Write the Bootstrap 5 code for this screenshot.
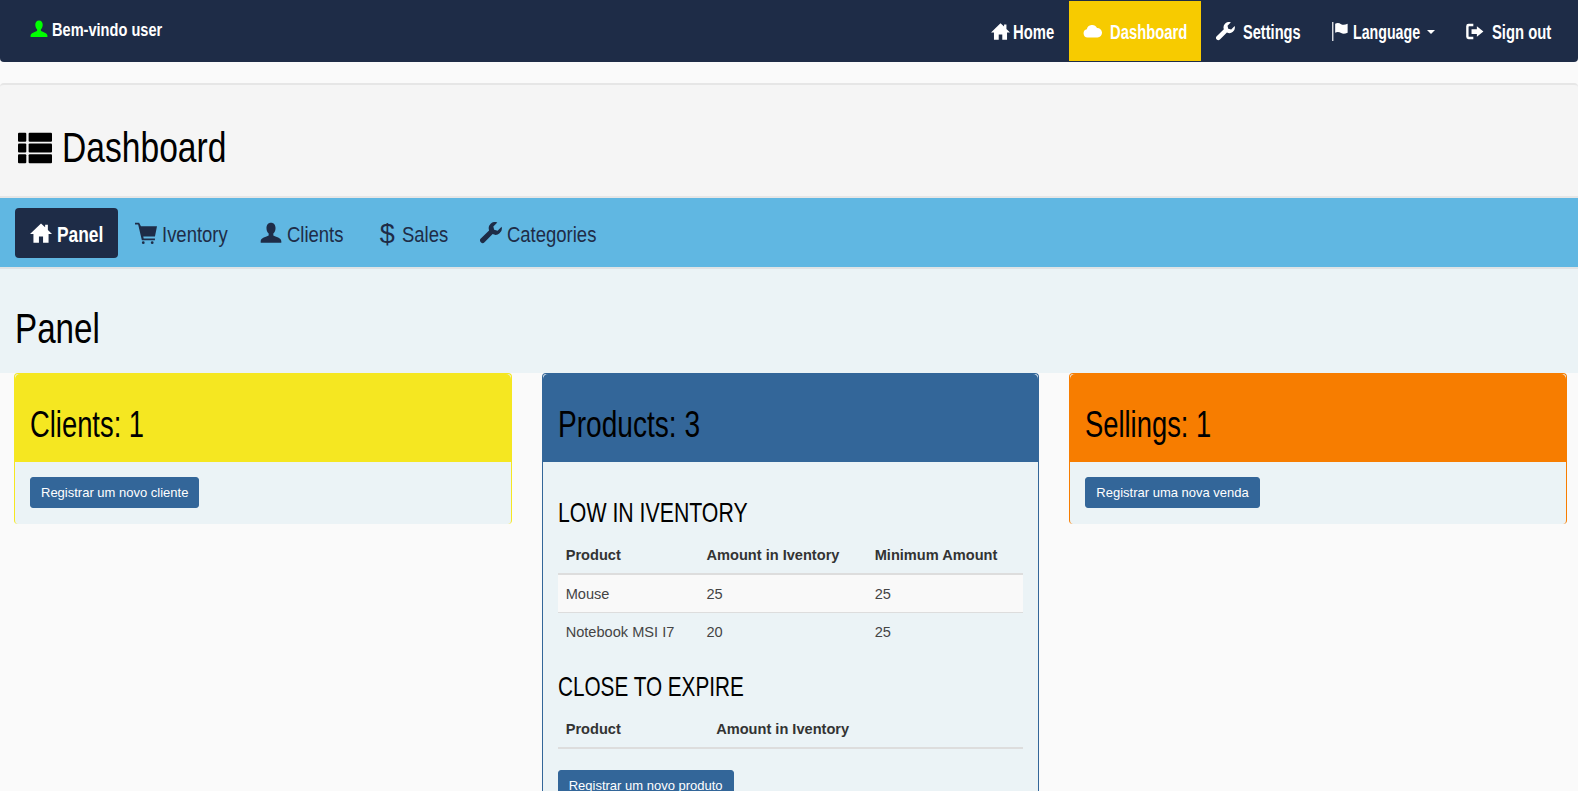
<!DOCTYPE html>
<html lang="en">
<head>
    <meta charset="UTF-8">
    <meta name="viewport" content="width=device-width, initial-scale=1.0">
    <title>Dashboard</title>
    <link rel="stylesheet" href="https://cdn.jsdelivr.net/npm/bootstrap@5.3.0/dist/css/bootstrap.min.css">
    <style>
        body {
            background: #fafafa;
            font-family: "Liberation Sans", Arial, sans-serif;
            font-size: 14px;
            color: #333;
        }

        /* Fonte condensada: sem familia estreita instalada, a largura vem do scaleX */
        .cond {
            display: inline-block;
            transform-origin: left center;
            white-space: nowrap;
        }

        .cond-71 { transform: scaleX(.71); }
        .cond-73 { transform: scaleX(.73); }
        .cond-74 { transform: scaleX(.74); }
        .cond-76 { transform: scaleX(.76); }
        .cond-78 { transform: scaleX(.78); }
        .cond-79 { transform: scaleX(.79); }
        .cond-80 { transform: scaleX(.80); }
        .cond-81 { transform: scaleX(.81); }
        .cond-84 { transform: scaleX(.84); }

        svg.gi {
            width: 1em;
            height: 1em;
            fill: currentColor;
            vertical-align: -0.1em;
        }

        /* Barra superior */
        .top-bar {
            background: #1e2c47;
            height: 62px;
            padding: 0 12px 0 30px;
            border-radius: 0 0 4px 4px;
            font-size: 20px;
        }

        .welcome-text {
            color: #fff;
            font-size: 18px;
            font-weight: 700;
            margin-top: 17px;
        }

        .welcome-text svg {
            color: #00ff00;
            margin-right: 4px;
        }

        .top-bar .navbar-nav .nav-link {
            color: #fff;
            font-weight: 700;
            height: 60px;
            padding: 18px 15px 0;
            line-height: 26px;
        }

        .top-bar .navbar-nav .nav-link.active {
            background: #f7cb00;
            color: #fff;
            padding: 18px 14px 0;
        }

        .top-bar .nav-link svg {
            font-size: 19px;
            margin-right: 3px;
        }

        .top-bar .nav-link svg.me-2 {
            margin-right: 8px !important;
        }

        .top-bar .nav-item {
            margin-top: 1px;
        }

        .top-bar .dropdown-toggle::after {
            border-width: 4px 4px 0;
            margin-left: 7px;
        }

        /* Titulo */
        .title-band {
            background: #f5f5f5;
            border-top: 2px solid #e6e6e6;
            border-bottom: 2px solid #e6e6e6;
            border-radius: 4px 4px 0 0;
            height: 115px;
            margin-top: 21px;
            padding: 40px 18px 0;
            color: #000;
        }

        .title-band h1 {
            font-size: 42px;
            margin: 0;
            line-height: 46px;
        }

        .title-band svg {
            margin-right: 10px;
            font-size: 34px;
            vertical-align: -3px;
        }

        /* Menu de abas */
        .section-tabs {
            background: #60b7e2;
            height: 71px;
            padding: 10px 15px;
            border-bottom: 2px solid #dfe3e5;
            gap: 2px;
            font-size: 22px;
        }

        .section-tabs .nav-link {
            color: #1e2c47;
            padding: 0 15px;
            height: 50px;
            line-height: 54px;
            border-radius: 4px;
        }

        .section-tabs .nav-link svg {
            font-size: 22px;
            margin-right: 5px;
        }

        .section-tabs .nav-link.active {
            background: #1e2c47;
            color: #fff;
            font-weight: 700;
        }

        .dollar-sign {
            font-size: 27px;
            line-height: 1;
            margin: 0 7px 0 4px;
            vertical-align: -1px;
        }

        .panel-band {
            background: #ebf3f6;
            height: 104px;
            padding: 37px 15px 0;
            color: #000;
        }

        .panel-band h2 {
            font-size: 42px;
            line-height: 46px;
            margin: 0;
        }

        /* Cards */
        .cards-area {
            padding: 0 11px 0 14px;
        }

        .cards-row {
            --bs-gutter-x: 30px;
        }

        .stat-card {
            background: #ebf3f6;
            border-radius: 4px;
            border-bottom: 0;
        }

        .stat-card .card-header {
            height: 88px;
            padding: 31px 15px 0;
            border: 0;
            color: #000;
        }

        .stat-card .card-header h3 {
            font-size: 36px;
            line-height: 40px;
            margin: 0;
        }

        .stat-card .card-body {
            padding: 15px 15px 16px;
        }

        .card-yellow { border-color: #f5e721; }
        .card-yellow .card-header { background: #f5e721; }
        .card-blue { border-color: #336699; }
        .card-blue .card-header { background: #336699; }
        .card-orange { border-color: #f77d00; }
        .card-orange .card-header { background: #f77d00; }

        .btn-register {
            background: #336699;
            border-color: #336699;
            color: #fff;
            font-size: 13px;
            line-height: 19px;
            padding: 5px 10px;
            border-radius: 3px;
        }

        .list-title {
            font-size: 28px;
            line-height: 32px;
            margin: 20px 0 8px;
            color: #000;
        }

        .stock-table {
            --bs-table-bg: transparent;
            --bs-table-color: #333;
            margin-bottom: 21px;
            font-size: 14.6px;
        }

        .stock-table th, .stock-table td {
            padding: 8px;
            line-height: 20px;
            border-color: #ddd;
        }

        .stock-table td {
            padding: 9px 8px 7px;
            line-height: 21px;
            color: #444;
        }

        .stock-table thead th {
            border-bottom: 2px solid #ddd;
        }

        .stock-table tbody tr:last-child td {
            border-bottom: 0;
        }

        .stock-table .row-light td {
            background: #f9f9f9;
        }
    </style>
</head>
<body>
    <svg class="d-none">
        <symbol id="i-user" viewBox="0 0 16 16"><path d="M8 .5c2.1 0 3.3 1.6 3.3 3.8 0 1.7-.6 3.1-1.6 4v1.5c1.7.9 5.8 1.6 5.8 4.2v1H.5v-1c0-2.6 4.100-3.300 5.800-4.200V8.300c-1-.9-1.600-2.300-1.600-4C4.700 2.100 5.900.5 8 .5z"/></symbol>
        <symbol id="i-home" viewBox="0 0 16 16"><path d="M8 1 0 8.800h2.500V15h4v-4.500h3V15h4V8.800H16l-3-3V2h-2v1.800z"/></symbol>
        <symbol id="i-cloud" viewBox="0 0 16 16"><path d="M3.800 13a3.500 3.500 0 0 1-.6-6.900A4.600 4.600 0 0 1 11.800 5 4 4 0 0 1 12.200 13z"/></symbol>
        <symbol id="i-wrench" viewBox="0 0 16 16"><path d="m15.700 3.400-2.900 2.900-2.500-.6-.6-2.500L12.600.3a4.600 4.600 0 0 0-6 5.800L.6 12a1.900 1.900 0 0 0 2.700 2.700l5.900-5.900a4.600 4.600 0 0 0 6.500-5.400z"/></symbol>
        <symbol id="i-flag" viewBox="0 0 16 16"><path d="M1 0h1v16H1zM3.500 1.500c2-1 3.500-.5 5 .3s3 .8 5.500-.3v7.500c-2.500 1.100-4 1.100-5.500.3s-3-1.300-5-.3z"/></symbol>
        <symbol id="i-logout" viewBox="0 0 16 16"><path d="M7 1.500H3a2 2 0 0 0-2 2v9a2 2 0 0 0 2 2h4v-2H3.500a.5.500 0 0 1-.5-.5v-8a.5.500 0 0 1 .5-.5H7z"/><path d="M10 3.500 15.500 8 10 12.500V10H5.500V6H10z"/></symbol>
        <symbol id="i-cart" viewBox="0 0 16 16"><path d="M0 .5h3L4.300 3H16l-1.500 7.500H6l.3 1.500h8.200v1.300H5L2.300 1.800H0z"/><circle cx="6" cy="15" r="1"/><circle cx="12.500" cy="15" r="1"/></symbol>
        <symbol id="i-list" viewBox="0 0 16 16"><rect x="0" y=".8" width="3.900" height="4.300" rx=".5"/><rect x="5" y=".8" width="11" height="4.300" rx=".5"/><rect x="0" y="5.850" width="3.900" height="4.300" rx=".5"/><rect x="5" y="5.850" width="11" height="4.300" rx=".5"/><rect x="0" y="10.900" width="3.900" height="4.300" rx=".5"/><rect x="5" y="10.900" width="11" height="4.300" rx=".5"/></symbol>
    </svg>

    <nav class="navbar navbar-expand top-bar d-flex justify-content-between align-items-start">
        <span class="welcome-text"><svg class="gi"><use href="#i-user"/></svg><span class="cond cond-81">Bem-vindo user</span></span>
        <ul class="navbar-nav">
            <li class="nav-item"><a class="nav-link" href="#"><svg class="gi"><use href="#i-home"/></svg><span class="cond cond-74">Home</span></a></li>
            <li class="nav-item"><a class="nav-link active" href="#"><svg class="gi me-2"><use href="#i-cloud"/></svg><span class="cond cond-74">Dashboard</span></a></li>
            <li class="nav-item"><a class="nav-link" href="#"><svg class="gi me-2"><use href="#i-wrench"/></svg><span class="cond cond-73">Settings</span></a></li>
            <li class="nav-item"><a class="nav-link dropdown-toggle" href="#"><svg class="gi"><use href="#i-flag"/></svg><span class="cond cond-71">Language</span></a></li>
            <li class="nav-item"><a class="nav-link" href="#"><svg class="gi me-2"><use href="#i-logout"/></svg><span class="cond cond-74">Sign out</span></a></li>
        </ul>
    </nav>

    <div class="title-band">
        <h1><svg class="gi"><use href="#i-list"/></svg><span class="cond cond-80">Dashboard</span></h1>
    </div>

    <ul class="nav section-tabs">
        <li class="nav-item"><a class="nav-link active" href="#"><svg class="gi"><use href="#i-home"/></svg><span class="cond cond-79">Panel</span></a></li>
        <li class="nav-item"><a class="nav-link" href="#"><svg class="gi"><use href="#i-cart"/></svg><span class="cond cond-84">Iventory</span></a></li>
        <li class="nav-item"><a class="nav-link" href="#"><svg class="gi"><use href="#i-user"/></svg><span class="cond cond-84">Clients</span></a></li>
        <li class="nav-item"><a class="nav-link" href="#"><span class="dollar-sign">$</span><span class="cond cond-84">Sales</span></a></li>
        <li class="nav-item"><a class="nav-link" href="#"><svg class="gi"><use href="#i-wrench"/></svg><span class="cond cond-84">Categories</span></a></li>
    </ul>

    <div class="panel-band">
        <h2><span class="cond cond-79">Panel</span></h2>
    </div>

    <div class="cards-area">
        <div class="row cards-row">
            <div class="col-4">
                <div class="card stat-card card-yellow">
                    <div class="card-header"><h3><span class="cond cond-76">Clients: 1</span></h3></div>
                    <div class="card-body">
                        <a class="btn btn-register" href="#">Registrar um novo cliente</a>
                    </div>
                </div>
            </div>
            <div class="col-4">
                <div class="card stat-card card-blue">
                    <div class="card-header"><h3><span class="cond cond-78">Products: 3</span></h3></div>
                    <div class="card-body">
                        <h4 class="list-title"><span class="cond cond-76">LOW IN IVENTORY</span></h4>
                        <table class="table stock-table">
                            <thead>
                                <tr><th>Product</th><th>Amount in Iventory</th><th>Minimum Amount</th></tr>
                            </thead>
                            <tbody>
                                <tr class="row-light"><td>Mouse</td><td>25</td><td>25</td></tr>
                                <tr><td>Notebook MSI I7</td><td>20</td><td>25</td></tr>
                            </tbody>
                        </table>
                        <h4 class="list-title"><span class="cond cond-74">CLOSE TO EXPIRE</span></h4>
                        <table class="table stock-table">
                            <thead>
                                <tr><th>Product</th><th>Amount in Iventory</th></tr>
                            </thead>
                        </table>
                        <a class="btn btn-register" href="#">Registrar um novo produto</a>
                    </div>
                </div>
            </div>
            <div class="col-4">
                <div class="card stat-card card-orange">
                    <div class="card-header"><h3><span class="cond cond-76">Sellings: 1</span></h3></div>
                    <div class="card-body">
                        <a class="btn btn-register" href="#">Registrar uma nova venda</a>
                    </div>
                </div>
            </div>
        </div>
    </div>

    <script src="https://cdn.jsdelivr.net/npm/bootstrap@5.3.0/dist/js/bootstrap.bundle.min.js"></script>
    <script>
        // o scaleX nao muda a caixa do texto, entao desconta a sobra na margem
        document.querySelectorAll('.cond').forEach(el => {
            const scale = new DOMMatrix(getComputedStyle(el).transform).a;
            el.style.marginRight = (-el.offsetWidth * (1 - scale)) + 'px';
        });
    </script>
</body>
</html>
